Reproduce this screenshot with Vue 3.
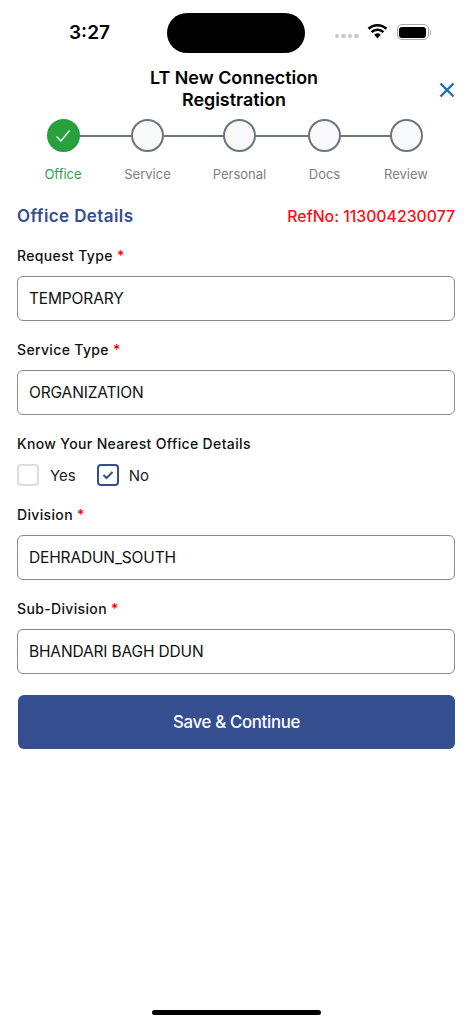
<script setup>
const steps = [
  { label: 'Office', done: true, width: 84.5 },
  { label: 'Service', width: 92 },
  { label: 'Personal', width: 85 },
  { label: 'Docs', width: 81.5 },
  { label: 'Review', width: 33 },
]
const fields1 = [
  { label: 'Request Type', value: 'TEMPORARY' },
  { label: 'Service Type', value: 'ORGANIZATION' },
]
const fields2 = [
  { label: 'Division', value: 'DEHRADUN_SOUTH' },
  { label: 'Sub-Division', value: 'BHANDARI BAGH DDUN' },
]
</script>

<template>
  <div class="screen">
    <header class="status">
      <span class="time">3:27</span>
      <div class="island"></div>
      <div class="status-right">
        <div class="dots"><i></i><i></i><i></i><i></i></div>
        <svg class="wifi" width="21" height="16" viewBox="0 0 21 16">
          <path d="M10.5 15.5 L7.2 11.7 A5 5 0 0 1 13.8 11.7 Z" fill="#000" />
          <path d="M4.6 9.2 A8.6 8.6 0 0 1 16.4 9.2" fill="none" stroke="#000" stroke-width="2.5" />
          <path d="M1.6 5.7 A13 13 0 0 1 19.4 5.7" fill="none" stroke="#000" stroke-width="2.6" />
        </svg>
        <div class="battery"><div class="battery-fill"></div></div>
        <div class="battery-cap"></div>
      </div>
    </header>

    <div class="title-bar">
      <h1 class="title">LT New Connection<br />Registration</h1>
      <svg class="close" width="16" height="16" viewBox="0 0 16 16">
        <path d="M1.5 1.5 L14.5 14.5 M14.5 1.5 L1.5 14.5" stroke="#1b6fb5" stroke-width="2.4" fill="none" />
      </svg>
    </div>

    <div class="stepper">
      <div v-for="(s, i) in steps" :key="s.label" class="step" :style="{ width: s.width + 'px' }">
        <div class="node-row">
          <div v-if="i < steps.length - 1" class="line"></div>
          <div class="node" :class="{ done: s.done }">
            <svg v-if="s.done" width="16" height="14" viewBox="0 0 16 14">
              <path d="M1.5 7.5 L6 12 L14.5 1.5" fill="none" stroke="#fff" stroke-width="1.3" />
            </svg>
          </div>
        </div>
        <span class="step-label" :class="{ done: s.done }">{{ s.label }}</span>
      </div>
    </div>

    <main class="form">
      <div class="section-head">
        <h2 class="section-title">Office Details</h2>
        <span class="ref">RefNo: 113004230077</span>
      </div>

      <div v-for="f in fields1" :key="f.label" class="field">
        <label class="label">{{ f.label }} <em>*</em></label>
        <div class="input">{{ f.value }}</div>
      </div>

      <div class="know">
        <div class="label">Know Your Nearest Office Details</div>
        <div class="checks">
          <div class="check-item yes">
            <span class="box"></span>
            <span class="check-text">Yes</span>
          </div>
          <div class="check-item">
            <span class="box on">
              <svg width="12" height="10" viewBox="0 0 12 10">
                <path d="M1.5 5 L4.5 8 L10.5 2" fill="none" stroke="#344e8f" stroke-width="2" />
              </svg>
            </span>
            <span class="check-text">No</span>
          </div>
        </div>
      </div>

      <div v-for="f in fields2" :key="f.label" class="field">
        <label class="label">{{ f.label }} <em>*</em></label>
        <div class="input">{{ f.value }}</div>
      </div>

      <button class="save" type="button">Save &amp; Continue</button>
    </main>

    <div class="home-indicator"></div>
  </div>
</template>

<style>
html, body { margin: 0; background: #fff; }
</style>

<style scoped>
* { box-sizing: border-box; }
.screen {
  position: relative;
  width: 472px;
  height: 1024px;
  overflow: hidden;
  background: #fff;
  font-family: Inter, "Liberation Sans", sans-serif;
  color: #000;
}
.status {
  height: 67px;
  display: flex;
  align-items: flex-start;
  padding: 13px 41px 0 69px;
}
.time {
  width: 98px;
  margin-top: 8px;
  font-size: 19px;
  font-weight: 600;
  line-height: 24px;
}
.island {
  width: 138px;
  height: 40px;
  border-radius: 20px;
  background: #000;
}
.status-right {
  display: flex;
  align-items: center;
  margin-left: 30px;
  margin-top: 11px;
}
.dots { display: flex; gap: 1.8px; margin-top: 8px; margin-right: 8px; }
.dots i { width: 4.6px; height: 4.6px; border-radius: 50%; background: #c9c9c9; display: block; }
.wifi { margin-right: 9px; margin-top: -2px; }
.battery {
  width: 32px;
  height: 16px;
  border: 1.5px solid #a8a8a8;
  border-radius: 5px;
  padding: 1.5px;
}
.battery-fill { width: 100%; height: 100%; border-radius: 3px; background: #000; }
.battery-cap { width: 1.5px; height: 5px; background: #a8a8a8; border-radius: 0 1px 1px 0; margin-left: 1px; }
.title-bar {
  position: relative;
  height: 46px;
  display: flex;
  justify-content: center;
  padding-right: 4px;
}
.title {
  margin: 0;
  font-size: 17.9px;
  font-weight: 600;
  line-height: 22px;
  text-align: center;
}
.close { position: absolute; left: 438.5px; top: 15px; }
.stepper {
  display: flex;
  align-items: flex-start;
  margin-top: 6px;
  padding-left: 46.5px;
}
.step { display: flex; flex-direction: column; align-items: flex-start; }
.node-row { position: relative; height: 34px; width: 100%; }
.line {
  position: absolute;
  left: 30px;
  right: -2px;
  top: 16px;
  height: 2px;
  background: #6c757d;
}
.node {
  position: relative;
  width: 33px;
  height: 33px;
  border-radius: 50%;
  border: 2px solid #6c757d;
  background: #f8f9fa;
  display: flex;
  align-items: center;
  justify-content: center;
}
.node.done { background: #28a03c; border-color: #2a9d3d; }
.step-label {
  margin-top: 11.5px;
  width: 33px;
  display: flex;
  justify-content: center;
  white-space: nowrap;
  font-size: 13px;
  line-height: 18px;
  color: #7a8087;
}
.step-label.done { color: #2fa24a; }
.form {
  padding: 0 17px;
  margin-top: 20.5px;
}
.section-head {
  display: flex;
  justify-content: space-between;
  align-items: center;
  height: 26px;
}
.section-title {
  margin: 0;
  font-size: 17px;
  font-weight: 600;
  letter-spacing: 0.4px;
  color: #344e8f;
}
.ref {
  font-size: 15.8px;
  font-weight: 500;
  color: #fa0f16;
}
.field { margin-top: 17px; }
.field + .field { margin-top: 19.5px; }
.label {
  display: block;
  font-size: 14px;
  font-weight: 500;
  letter-spacing: 0.35px;
  line-height: 20px;
  color: #111;
}
.label em { color: #f00; font-style: normal; }
.input {
  margin-top: 9.5px;
  height: 45px;
  border: 1px solid #8a8a8a;
  border-radius: 6px;
  padding: 0 11px;
  display: flex;
  align-items: center;
  font-size: 15.5px;
  letter-spacing: -0.15px;
  color: #111;
}
.know { margin-top: 19.5px; }
.checks { display: flex; margin-top: 10px; height: 22px; align-items: center; }
.check-item { display: flex; align-items: center; gap: 10px; }
.yes { gap: 11px; margin-right: 21px; }
.box {
  width: 22px;
  height: 22px;
  border: 2px solid #ddd;
  border-radius: 4px;
  display: flex;
  align-items: center;
  justify-content: center;
}
.box.on { border-color: #344e8f; }
.check-text { font-size: 15px; color: #222; }
.know + .field { margin-top: 19px; }
.save {
  display: block;
  width: 437px;
  height: 54px;
  margin: 21px 0 0 1px;
  padding-top: 2px;
  border: 0;
  border-radius: 6px;
  background: #344e8f;
  color: #fff;
  font-family: Inter, "Liberation Sans", sans-serif;
  font-size: 16.8px;
  font-weight: 500;
  letter-spacing: -0.3px;
}
.home-indicator {
  position: absolute;
  left: 152px;
  top: 1010px;
  width: 169px;
  height: 5px;
  border-radius: 3px;
  background: #000;
}
</style>
